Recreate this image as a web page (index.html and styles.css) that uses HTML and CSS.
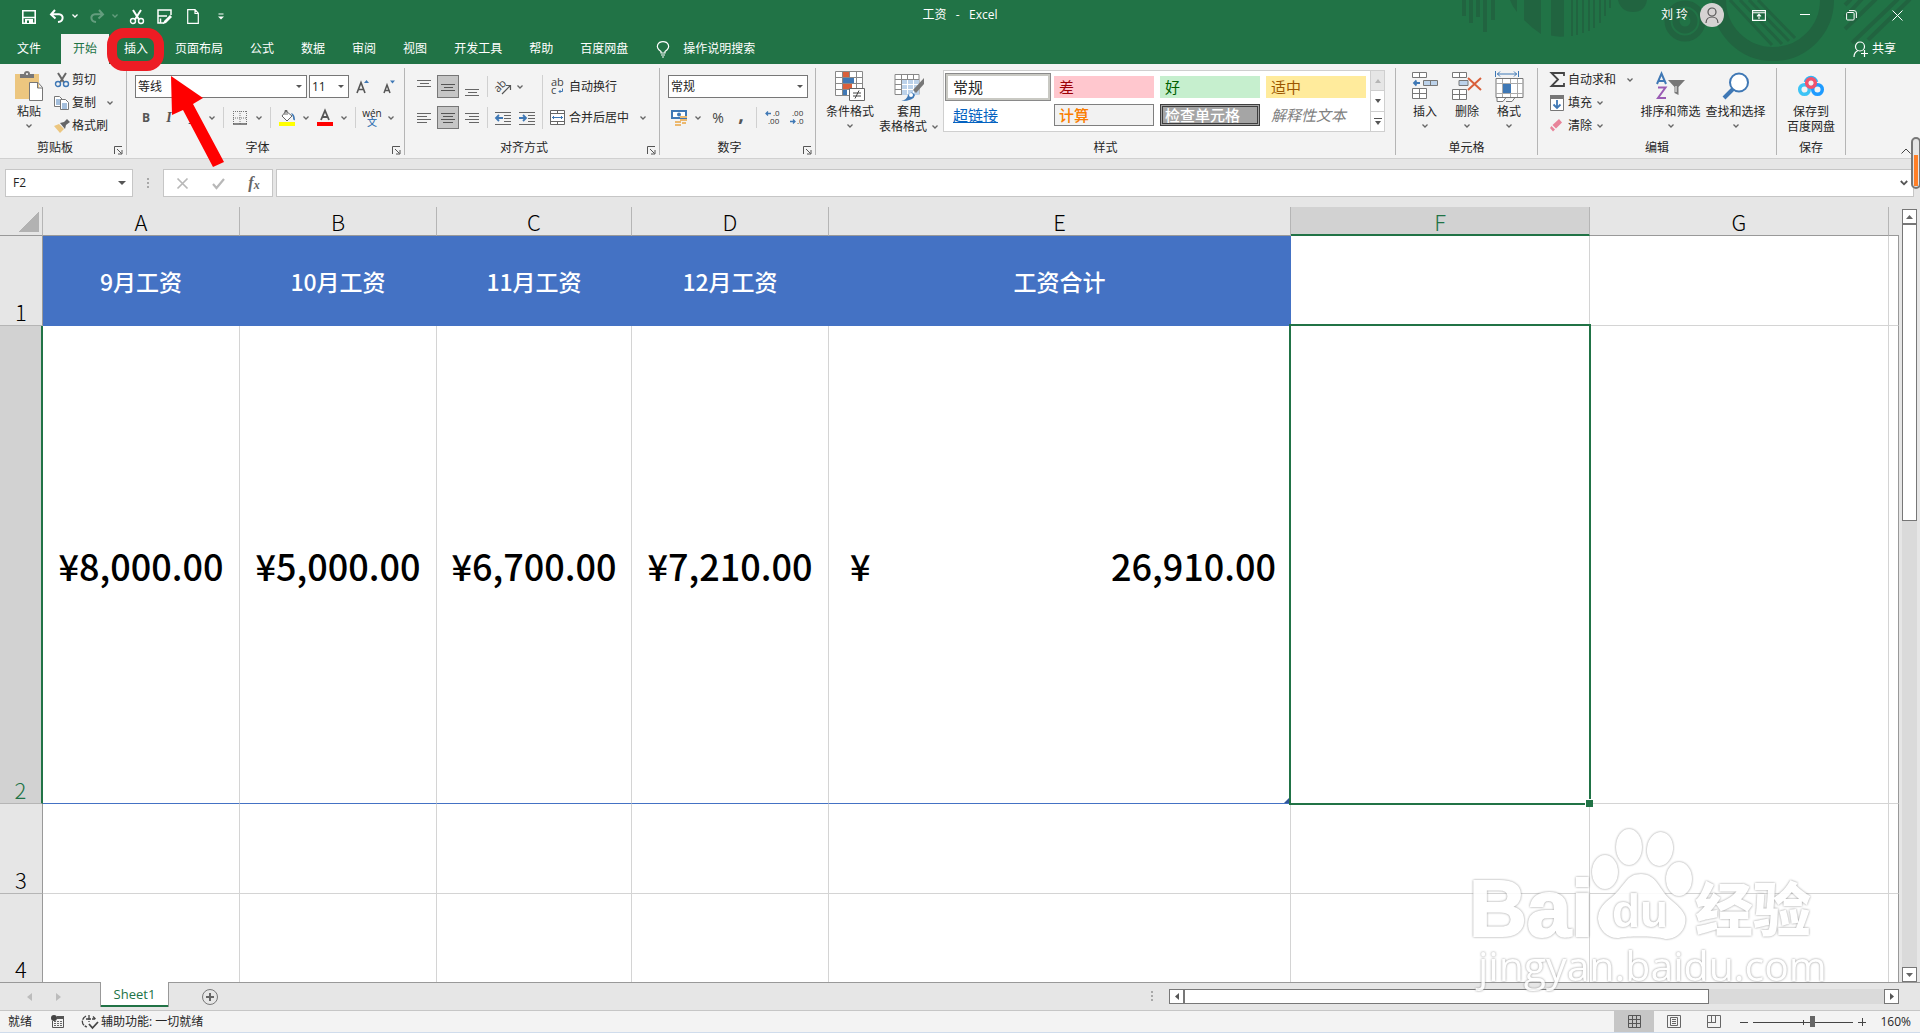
FILE: index.html
```html
<!DOCTYPE html>
<html lang="zh-CN">
<head>
<meta charset="utf-8">
<title>工资 - Excel</title>
<link rel="stylesheet" href="styles.css">
</head>
<body>
<svg class="defs" width="0" height="0" aria-hidden="true">
  <symbol id="chev" viewBox="0 0 8 8"><path d="M1.500 2.500L4 5L6.500 2.500" fill="none" stroke="currentColor" stroke-width="1.300"/></symbol>
  <symbol id="launch" viewBox="0 0 9 9"><path d="M.5 8V.5H8M3 3l4.500 4.500M8 4v4H4" fill="none" stroke="#555"/></symbol>
  <symbol id="cut" viewBox="0 0 16 16"><path d="M4 1l6 9.500M12 1L6 10.500" fill="none" stroke="var(--blade)" stroke-width="2"/><circle cx="4" cy="12" r="2.500" fill="none" stroke="var(--ring)" stroke-width="1.400"/><circle cx="12" cy="12" r="2.500" fill="none" stroke="var(--ring)" stroke-width="1.400"/></symbol>
</svg>

<div class="app">
<header class="top">
  <svg class="decor" width="480" height="64" viewBox="0 0 480 64" aria-hidden="true">
    <g fill="#216440">
      <path d="M22 0h4v16h-4zM29 0h4v23h-4zM36 0h4v17h-4zM43 0h4v32h-4zM51 0h4v20h-4z"/>
      <path d="M70 0H77V12Q72 6 70 0zM84 0h17v34Q92 28 84 20zM111 0h13v36.500q-7 .5-13-1zM131 0h2v36h-2zM136 0h2v35h-2zM142 0h2v33h-2zM148 0h2v31h-2zM153 0h2v28h-2zM159 0h2v23h-2zM164 0h2v16h-2zM169 0h2v8h-2z"/>
      <path d="M178 0h29q-2 12-14 12T178 0z"/>
    </g>
    <g fill="none" stroke="#216440">
      <circle cx="245" cy="21" r="17.500" stroke-width="6"/><circle cx="245" cy="21" r="9" stroke-width="7"/>
      <circle cx="333" cy="0" r="54" stroke-width="14"/>
      <path d="M290 0l42 45M300 0l42 44M309 0l40 41M318 0l37 38" stroke-width="3"/>
      <path d="M405 5l6-6M405 17l17-18M405 29l31-30M412 43l46-44M428 40l42-41" stroke-width="4"/>
    </g>
  </svg>

  <div class="titlebar">
    <div class="qat">
      <button class="tb" aria-label="保存"><svg width="14" height="14" viewBox="0 0 14 14"><path d="M.8.800h12.400v12.400H.8zM.8 7.500h12.400" fill="none" stroke="#fff" stroke-width="1.600"/><path d="M3 9h8v4H3z" fill="#fff"/><path d="M5 10.500h2V13H5z" fill="#217346"/></svg></button>
      <span class="split"><button class="tb" aria-label="撤消"><svg width="16" height="15" viewBox="0 0 16 15"><path d="M6 1L2 5.500L6.500 9.500M2.500 5.300H10c5 .2 5 7-1 7.700" fill="none" stroke="#fff" stroke-width="2"/></svg></button><button class="dd" aria-label="撤消列表"><svg width="8" height="8"><use href="#chev"/></svg></button></span>
      <span class="split faded"><button class="tb" aria-label="恢复"><svg width="16" height="15" viewBox="0 0 16 15"><path d="M10 1l4 4.500L9.500 9.500M13.500 5.300H6c-5 .2-5 7 1 7.700" fill="none" stroke="#fff" stroke-width="2"/></svg></button><button class="dd" aria-label="恢复列表"><svg width="8" height="8"><use href="#chev"/></svg></button></span>
      <button class="tb cut-white" aria-label="剪切"><svg width="16" height="16"><use href="#cut"/></svg></button>
      <button class="tb" aria-label="另存为"><svg width="16" height="16" viewBox="0 0 16 16"><path d="M7 14H1V1h13v5M1.500 7H10M3.500 9.500V14" fill="none" stroke="#fff" stroke-width="1.500"/><path d="M6 15l1-3 6-6 2 2-6 6z" fill="#fff"/></svg></button>
      <button class="tb" aria-label="新建"><svg width="12" height="15" viewBox="0 0 12 15"><path d="M.7.700H8l3.300 3.600v10H.7zM8 1v3.500h3" fill="none" stroke="#fff" stroke-width="1.200"/></svg></button>
      <button class="tb" aria-label="自定义快速访问工具栏"><svg width="6" height="8" viewBox="0 0 6 8"><path d="M.5 1h5" stroke="#fff"/><path d="M0 3.500h6l-3 3z" fill="#fff"/></svg></button>
    </div>
    <h1 class="doc">工资&nbsp;&nbsp; -&nbsp;&nbsp; Excel</h1>
    <div class="winctl">
      <span class="user">刘 玲</span>
      <svg class="avatar" width="24" height="24" viewBox="0 0 24 24"><circle cx="12" cy="12" r="12" fill="#d6d3d3"/><circle cx="12" cy="9" r="4" fill="none" stroke="#555" stroke-width="1.200"/><path d="M6 20c0-8 12-8 12 0" fill="none" stroke="#555" stroke-width="1.200"/></svg>
      <button class="win" aria-label="功能区显示选项"><svg width="14" height="11" viewBox="0 0 14 11"><path d="M.6.600h12.800v9.800H.6zM.6 2.800h12.800M7 9V4.500M5 6.300l2-2 2 2" fill="none" stroke="#fff" stroke-width="1.100"/></svg></button>
      <button class="win" aria-label="最小化"><svg width="10" height="10"><path d="M0 4.500h10" stroke="#fff"/></svg></button>
      <button class="win" aria-label="还原"><svg width="11" height="11" viewBox="0 0 11 11"><rect x=".6" y="2.500" width="7.500" height="7.500" rx="1" fill="none" stroke="#fff"/><path d="M3 .6h5q2.400 0 2.400 2.400v5" fill="none" stroke="#fff"/></svg></button>
      <button class="win" aria-label="关闭"><svg width="11" height="11"><path d="M.5.500l10 10M10.500.500l-10 10" stroke="#fff"/></svg></button>
    </div>
  </div>

  <nav class="tabs">
    <button class="tab file">文件</button>
    <button class="tab active">开始</button>
    <button class="tab">插入</button>
    <button class="tab">页面布局</button>
    <button class="tab">公式</button>
    <button class="tab">数据</button>
    <button class="tab">审阅</button>
    <button class="tab">视图</button>
    <button class="tab">开发工具</button>
    <button class="tab">帮助</button>
    <button class="tab">百度网盘</button>
    <button class="tab tell"><svg width="12" height="17" viewBox="0 0 12 17"><path d="M4 12V10.500C-3 5.500 1.500.600 6 .6s9 4.900 2 9.900V12zM4 14h4M5 16h2" fill="none" stroke="#fff" stroke-width="1.200"/></svg>操作说明搜索</button>
    <button class="tab share"><svg width="15" height="17" viewBox="0 0 15 17"><circle cx="7" cy="5.500" r="4.500" fill="none" stroke="#fff" stroke-width="1.200"/><path d="M1 16c0-4 2-5.500 4-6.500M11.500 9v7M8 12.500h7" fill="none" stroke="#fff" stroke-width="1.200"/></svg>共享</button>
  </nav>
</header>

<section class="ribbon">
  <div class="group g-clip">
    <div class="body">
      <button class="big">
        <span class="pic"><svg width="28" height="30" viewBox="0 0 28 30"><path d="M0 3h24v25H0z" fill="#ecc67f"/><path d="M5 7V3h4q0-3 3-3t3 3h4v4z" fill="#777"/><path d="M14.500 11.500h8.500l4.500 5v13h-13zM22.500 12v5h5" fill="#fff" stroke="#777"/><circle cx="12" cy="3" r="1" fill="#fff"/></svg></span>
        <span>粘贴</span><svg width="8" height="8"><use href="#chev"/></svg>
      </button>
      <div class="stack">
        <button class="small cut-grey"><span class="ico"><svg width="16" height="16"><use href="#cut"/></svg></span>剪切</button>
        <button class="small"><span class="ico"><svg width="16" height="14" viewBox="0 0 16 14"><path d="M.5.500h5l3 3v7h-8z" fill="#fff" stroke="#777"/><path d="M2 4h4M2 6h4M2 8h4" stroke="#4a7fb8"/><path d="M6.500 3.500h5l3 3v7h-8z" fill="#fff" stroke="#777"/><path d="M8 8h5M8 10h5M8 12h5" stroke="#4a7fb8"/></svg></span>复制<svg class="after" width="8" height="8"><use href="#chev"/></svg></button>
        <button class="small"><span class="ico"><svg width="16" height="14" viewBox="0 0 16 14"><path d="M0 7l5-2 5 5-4 4z" fill="#ecc67f"/><path d="M6 4l4-1 3-3 3 3-4 3-1 4z" fill="#666"/></svg></span>格式刷</button>
      </div>
    </div>
    <div class="foot"><span>剪贴板</span><button class="launch" aria-label="剪贴板选项"><svg width="9" height="9"><use href="#launch"/></svg></button></div>
  </div>

  <div class="group g-font">
    <div class="body rows">
      <div class="line">
        <span class="combo fontname"><select aria-label="字体"><option>等线</option></select></span>
        <span class="combo fontsize"><select aria-label="字号"><option>11</option></select></span>
        <button class="ib" aria-label="增大字号"><svg width="14" height="16" viewBox="0 0 14 16"><path d="M1 14L5 3.500L9 14M2.500 10.500h5" fill="none" stroke="#555" stroke-width="1.600"/><path d="M8 4l2.500-3L13 4z" fill="#3f78b5"/></svg></button>
        <button class="ib" aria-label="减小字号"><svg width="14" height="16" viewBox="0 0 14 16"><path d="M2 14L5 6l3 8M3 11.500h4" fill="none" stroke="#555" stroke-width="1.500"/><path d="M8 1.500h5L10.500 4.500z" fill="#3f78b5"/></svg></button>
      </div>
      <div class="line tight">
        <button class="ib bold">B</button><button class="ib ital">I</button><button class="ib under">U</button><button class="dd" aria-label="下划线样式"><svg width="8" height="8"><use href="#chev"/></svg></button>
        <i class="sep"></i>
        <button class="ib" aria-label="边框"><svg width="14" height="14" viewBox="0 0 14 14"><path d="M0 .5h14M.5 0v13M7 0v13M13.500 0v13M0 7h14" stroke="#777" stroke-dasharray="1 1"/><path d="M0 13h14" stroke="#555" stroke-width="1.400"/></svg></button><button class="dd" aria-label="边框样式"><svg width="8" height="8"><use href="#chev"/></svg></button>
        <i class="sep"></i>
        <button class="ib" aria-label="填充颜色"><svg width="17" height="17" viewBox="0 0 17 17"><path d="M7 2l6 5-5 5-5-5z" fill="#fff" stroke="#666"/><path d="M6 6V1.500h2V6" fill="none" stroke="#666"/><path d="M12 4q4 1 4 7-2 1-2-3z" fill="#3f78b5"/><path d="M0 13h16v4H0z" fill="#ff0"/></svg></button><button class="dd" aria-label="填充颜色列表"><svg width="8" height="8"><use href="#chev"/></svg></button>
        <button class="ib" aria-label="字体颜色"><svg width="16" height="17" viewBox="0 0 16 17"><path d="M4 11L8 1.500L12 11M5.500 8h5" fill="none" stroke="#555" stroke-width="1.800"/><path d="M0 13h16v4H0z" fill="red"/></svg></button><button class="dd" aria-label="字体颜色列表"><svg width="8" height="8"><use href="#chev"/></svg></button>
        <i class="sep"></i>
        <button class="ib pinyin"><span>wén</span><b>文</b></button><button class="dd" aria-label="拼音"><svg width="8" height="8"><use href="#chev"/></svg></button>
      </div>
    </div>
    <div class="foot"><span>字体</span><button class="launch" aria-label="字体设置"><svg width="9" height="9"><use href="#launch"/></svg></button></div>
  </div>

  <div class="group g-align">
    <div class="body">
      <div class="rows">
        <div class="line">
          <button class="al" aria-label="顶端对齐"><svg width="14" height="20"><path d="M0 3.500h14M3 6.500h9M0 9.500h14" stroke="#666"/></svg></button>
          <button class="al on" aria-label="垂直居中"><svg width="14" height="20"><path d="M0 7.500h14M3 10.500h9M0 13.500h14" stroke="#555"/></svg></button>
          <button class="al" aria-label="底端对齐"><svg width="14" height="20"><path d="M0 12.500h14M3 15.500h9M0 18.500h14" stroke="#666"/></svg></button>
          <i class="sep"></i>
          <button class="al" aria-label="方向"><svg width="17" height="16" viewBox="0 0 17 16"><text x="0" y="11" font-size="11" fill="#444" transform="rotate(-45 5 9)">ab</text><path d="M7 15l8-8M11 6.500h4.500V11" fill="none" stroke="#555" stroke-width="1.200"/></svg></button><svg width="8" height="8"><use href="#chev"/></svg>
        </div>
        <div class="line">
          <button class="al" aria-label="左对齐"><svg width="14" height="12"><path d="M0 1.500h14M0 4.500h10M0 7.500h14M0 10.500h10" stroke="#666"/></svg></button>
          <button class="al on" aria-label="居中"><svg width="14" height="12"><path d="M0 1.500h14M2 4.500h10M0 7.500h14M2 10.500h10" stroke="#555"/></svg></button>
          <button class="al" aria-label="右对齐"><svg width="14" height="12"><path d="M0 1.500h14M4 4.500h10M0 7.500h14M4 10.500h10" stroke="#666"/></svg></button>
          <i class="sep"></i>
          <button class="al" aria-label="减少缩进"><svg width="16" height="14"><path d="M0 1.500h16M9 4.500h7M9 7.500h7M9 10.500h7M0 13.500h16" stroke="#666"/><path d="M8 7H1M4 4L1 7l3 3" fill="none" stroke="#3f78b5" stroke-width="1.800"/></svg></button>
          <button class="al" aria-label="增加缩进"><svg width="16" height="14"><path d="M0 1.500h16M9 4.500h7M9 7.500h7M9 10.500h7M0 13.500h16" stroke="#666"/><path d="M0 7h7M4 4l3 3-3 3" fill="none" stroke="#3f78b5" stroke-width="1.800"/></svg></button>
        </div>
      </div>
      <i class="sep tall"></i>
      <div class="rows">
        <button class="small"><span class="ico"><svg width="14" height="16" viewBox="0 0 14 16"><text x="0" y="7" font-size="11" fill="#444">ab</text><text x="0" y="15" font-size="11" fill="#444">c</text><path d="M11.500 9.500v3H8M9.500 11L8 12.500 9.500 14" fill="none" stroke="#3f78b5"/></svg></span>自动换行</button>
        <button class="small"><span class="ico"><svg width="16" height="15" viewBox="0 0 16 15"><path d="M.5.500h14v14H.5zM.5 3.500h14M.5 11.500h14M7.500 0v3M7.500 12v3" fill="#fff" stroke="#666"/><path d="M2 7.500h11M4 6L2.500 7.500 4 9M11 6l1.500 1.500L11 9" fill="none" stroke="#3f78b5"/></svg></span>合并后居中<svg class="after" width="8" height="8"><use href="#chev"/></svg></button>
      </div>
    </div>
    <div class="foot"><span>对齐方式</span><button class="launch" aria-label="对齐设置"><svg width="9" height="9"><use href="#launch"/></svg></button></div>
  </div>

  <div class="group g-num">
    <div class="body rows">
      <div class="line"><span class="combo wide"><select aria-label="数字格式"><option>常规</option></select></span></div>
      <div class="line tight">
        <button class="al" aria-label="会计格式"><svg width="17" height="16" viewBox="0 0 17 16"><path d="M1 1h14v7H1z" fill="#fff" stroke="#3f78b5" stroke-width="2"/><circle cx="8" cy="4.500" r="2" fill="#3f78b5"/><path d="M9 6h7v2H9zM9 9h7v2H9zM4 11h6v2H4zM4 14h6v2H4zM11 12h4v2h-4z" fill="#ecb96f"/></svg></button><button class="dd" aria-label="货币符号"><svg width="8" height="8"><use href="#chev"/></svg></button>
        <button class="ib pct">%</button><button class="ib comma">,</button>
        <i class="sep"></i>
        <button class="ib" aria-label="增加小数位数"><svg width="16" height="15" viewBox="0 0 16 15"><text x="8" y="6" font-size="8" fill="#333">.0</text><text x="3" y="14" font-size="8" fill="#333">.00</text><path d="M6 3.500H1M3 1.500l-2 2 2 2" fill="none" stroke="#3f78b5" stroke-width="1.300"/></svg></button>
        <button class="ib" aria-label="减少小数位数"><svg width="16" height="15" viewBox="0 0 16 15"><text x="3" y="6" font-size="8" fill="#333">.00</text><text x="8" y="14" font-size="8" fill="#333">.0</text><path d="M1 11.500h5M4 9.500l2 2-2 2" fill="none" stroke="#3f78b5" stroke-width="1.300"/></svg></button>
      </div>
    </div>
    <div class="foot"><span>数字</span><button class="launch" aria-label="数字设置"><svg width="9" height="9"><use href="#launch"/></svg></button></div>
  </div>

  <div class="group g-style">
    <div class="body">
      <button class="big w56"><span class="pic"><svg width="30" height="30" viewBox="0 0 30 30"><path d="M.5.500h27v24H.5zM.5 6.500h27M.5 12.500h27M.5 18.500h27M7.500 0v24M14.500 0v24M21.500 0v24" fill="#fff" stroke="#888"/><path d="M8 1h6v5H8zM8 13h9v5H8z" fill="#d9603b"/><path d="M8 7h11v5H8zM8 19h4v5H8z" fill="#3f78b5"/><path d="M14.500 17.500h15v12h-15z" fill="#fff" stroke="#666"/><path d="M18 22h8M18 25h8M24 19.500l-4 8" stroke="#444"/></svg></span><span>条件格式</span><svg width="8" height="8"><use href="#chev"/></svg></button>
      <button class="big w62"><span class="pic"><svg width="30" height="30" viewBox="0 0 30 30"><path d="M1 3.500h24v20H1zM1 8.500h24M1 13.500h24M1 18.500h24M7.500 3v20M13.500 3v20M19.500 3v20" fill="#fff" stroke="#888"/><path d="M8 9h17v15H8z" fill="#bcd2ea"/><path d="M8 13.500h17M8 18.500h17M13.500 9v14M19.500 9v14" stroke="#fff"/><path d="M30 7v6l-8 9-3-3z" fill="#777"/><path d="M7 30q6-1 7-6 4-5 7 0-1 6-14 6z" fill="#3f78b5"/><circle cx="17" cy="24" r="2" fill="#fff"/></svg></span><span>套用</span><span class="dual">表格格式<svg width="8" height="8"><use href="#chev"/></svg></span></button>
      <div class="gallery">
        <div class="swatches">
          <button class="sw normal">常规</button><button class="sw bad">差</button><button class="sw good">好</button><button class="sw neutral">适中</button>
          <button class="sw link">超链接</button><button class="sw calc">计算</button><button class="sw check">检查单元格</button><button class="sw expl">解释性文本</button>
        </div>
        <div class="gscroll">
          <button class="off" aria-label="上一行"><svg width="6" height="4"><path d="M0 4h6L3 0z" fill="#b5b5b5"/></svg></button>
          <button aria-label="下一行"><svg width="6" height="4"><path d="M0 0h6L3 4z" fill="#555"/></svg></button>
          <button aria-label="其他样式"><svg width="8" height="7"><path d="M0 .5h8" stroke="#555"/><path d="M1 3h6L4 7z" fill="#555"/></svg></button>
        </div>
      </div>
    </div>
    <div class="foot"><span>样式</span></div>
  </div>

  <div class="group g-cell">
    <div class="body">
      <button class="big w42"><span class="pic"><svg width="27" height="28" viewBox="0 0 27 28"><path d="M.5.500h14v5H.5zM7.500 0v5M.5 16.500h14v10H.5zM7.500 16v10M.5 21.500h14" fill="#fff" stroke="#777"/><path d="M11.500 8.500h14v5h-14z" fill="#bcd2ea" stroke="#777"/><path d="M18.500 8v5" stroke="#777"/><path d="M8 11H2M4.500 8.500L2 11l2.500 2.500" fill="none" stroke="#3f78b5" stroke-width="1.800"/></svg></span><span>插入</span><svg width="8" height="8"><use href="#chev"/></svg></button>
      <button class="big w42"><span class="pic"><svg width="30" height="28" viewBox="0 0 30 28"><path d="M.5.500h14v5H.5zM7.500 0v5M.5 17.500h14v10H.5zM7.500 17v10M.5 22.500h14" fill="#fff" stroke="#777"/><path d="M7 8.500h9v5H7z" fill="#bcd2ea" stroke="#777"/><path d="M16 6l13 12M29 6L16 18" stroke="#d9603b" stroke-width="2"/></svg></span><span>删除</span><svg width="8" height="8"><use href="#chev"/></svg></button>
      <button class="big w42"><span class="pic"><svg width="29" height="31" viewBox="0 0 29 31"><path d="M.5 0v6M23.500 0v6M2 3h20M5 .5L2.500 3 5 5.500M19 .5L21.500 3 19 5.500" fill="none" stroke="#3f78b5"/><path d="M2 26v4.500h6l3-4M11 30.500h6l3-4" fill="#fff" stroke="#777"/><path d="M1 7.500h27v19H1z" fill="#fff" stroke="#777"/><path d="M1 12.500h27M1 22.500h27M7.500 8v18M15.500 8v18M22.500 8v18" stroke="#aaa"/><path d="M8 13h8v9H8z" fill="#3f78b5"/></svg></span><span>格式</span><svg width="8" height="8"><use href="#chev"/></svg></button>
    </div>
    <div class="foot"><span>单元格</span></div>
  </div>

  <div class="group g-edit">
    <div class="body">
      <div class="stack">
        <button class="small"><span class="ico"><svg width="15" height="15" viewBox="0 0 15 15"><path d="M14 4V1H1.500L8 7.500 1.500 14H14v-3" fill="none" stroke="#444" stroke-width="1.800"/></svg></span>自动求和<svg class="after" width="8" height="8"><use href="#chev"/></svg></button>
        <button class="small near"><span class="ico"><svg width="14" height="16" viewBox="0 0 14 16"><path d="M.5.500h13v15H.5z" fill="#fff" stroke="#777"/><path d="M0 0h14v4H0z" fill="#777"/><path d="M7 5v8M3.500 9.500L7 13l3.500-3.500" fill="none" stroke="#3f78b5" stroke-width="1.800"/></svg></span>填充<svg class="after" width="8" height="8"><use href="#chev"/></svg></button>
        <button class="small near"><span class="ico"><svg width="14" height="14" viewBox="0 0 14 14"><path d="M9 0l3 3.500-6 6L2.500 6zM1.500 7L5 10.500 3 12.500 0 9z" fill="#e8849a"/></svg></span>清除<svg class="after" width="8" height="8"><use href="#chev"/></svg></button>
      </div>
      <button class="big w65"><span class="pic"><svg width="30" height="28" viewBox="0 0 30 28"><path d="M1 12L5.500 1.500 10 12M2.500 9h6" fill="none" stroke="#3f78b5" stroke-width="2"/><path d="M2 15.500h7.500L2 26h8" fill="none" stroke="#9a5cb4" stroke-width="2"/><path d="M12 8h17l-6.500 7v8l-4-2v-6z" fill="#777"/><path d="M20 14v6" stroke="#fff"/></svg></span><span>排序和筛选</span><svg width="8" height="8"><use href="#chev"/></svg></button>
      <button class="big w65"><span class="pic"><svg width="28" height="28" viewBox="0 0 28 28"><circle cx="17" cy="10.500" r="9" fill="#fff" stroke="#3f78b5" stroke-width="2"/><path d="M11 17l-9 9" stroke="#3f78b5" stroke-width="4"/></svg></span><span>查找和选择</span><svg width="8" height="8"><use href="#chev"/></svg></button>
    </div>
    <div class="foot"><span>编辑</span></div>
  </div>

  <div class="group g-save">
    <div class="body">
      <button class="big w56"><span class="pic"><svg width="26" height="22" viewBox="0 0 26 22" fill="none" stroke-width="3.500"><circle cx="6.500" cy="14.500" r="4.800" stroke="#3cc3f5"/><circle cx="19.500" cy="14.500" r="4.800" stroke="#1e9bff"/><path d="M7.500 7a5.600 5.600 0 0 1 11 0" stroke="#2cb5f8"/><circle cx="13" cy="8" r="4.300" stroke="#f2536c"/></svg></span><span>保存到</span><span>百度网盘</span></button>
    </div>
    <div class="foot"><span>保存</span></div>
  </div>
  <button class="collapse" aria-label="折叠功能区"><svg width="10" height="6"><path d="M.5 5.500L5 1l4.500 4.500" fill="none" stroke="#444"/></svg></button>
</section>

<section class="formula">
  <span class="combo namebox"><input aria-label="名称框" value="F2"></span>
  <svg class="grip" width="3" height="11"><path d="M0 0h2v2H0zM0 4h2v2H0zM0 8h2v2H0z" fill="#a8a8a8"/></svg>
  <div class="fxbox">
    <button aria-label="取消"><svg width="11" height="11"><path d="M.5.500l10 10M10.500.500l-10 10" stroke="#b8b8b8" stroke-width="1.700"/></svg></button>
    <button aria-label="输入"><svg width="13" height="11"><path d="M1 6l3.500 4L12 1" fill="none" stroke="#b8b8b8" stroke-width="2.200"/></svg></button>
    <button class="fx"><i>f</i><small>x</small></button>
  </div>
  <div class="fxline"><input aria-label="编辑栏"><svg width="8" height="6"><path d="M.8 1L4 4.300 7.200 1" fill="none" stroke="#555" stroke-width="1.800"/></svg></div>
</section>

<main class="work">
  <table class="sheet">
    <colgroup><col class="c-row"><col class="c-a"><col class="c-a"><col class="c-c"><col class="c-a"><col class="c-e"><col class="c-f"><col class="c-f"><col></colgroup>
    <thead><tr><th class="corner"></th><th>A</th><th>B</th><th>C</th><th>D</th><th>E</th><th class="sel">F</th><th>G</th><th></th></tr></thead>
    <tbody>
      <tr class="r1"><th>1</th><td>9月工资</td><td>10月工资</td><td>11月工资</td><td>12月工资</td><td>工资合计</td><td class="free"></td><td class="free"></td><td class="free"></td></tr>
      <tr class="r2"><th class="sel">2</th><td>¥8,000.00</td><td>¥5,000.00</td><td>¥6,700.00</td><td>¥7,210.00</td><td class="total"><div class="acct"><span>¥</span><span>26,910.00</span></div></td><td class="current"></td><td></td><td></td></tr>
      <tr class="r3"><th>3</th><td></td><td></td><td></td><td></td><td></td><td></td><td></td><td></td></tr>
      <tr class="r4"><th>4</th><td></td><td></td><td></td><td></td><td></td><td></td><td></td><td></td></tr>
    </tbody>
  </table>
  <div class="vscroll">
    <button aria-label="向上"><svg width="7" height="4"><path d="M0 4h7L3.500 0z" fill="#666"/></svg></button>
    <div class="vtrack"><div class="vthumb"></div></div>
    <button aria-label="向下"><svg width="7" height="4"><path d="M0 0h7L3.500 4z" fill="#666"/></svg></button>
  </div>
</main>

<div class="sheetbar">
  <div class="navs"><button aria-label="上一张"><svg width="5" height="8"><path d="M5 0v8L0 4z" fill="#bcbcbc"/></svg></button><button aria-label="下一张"><svg width="5" height="8"><path d="M0 0v8l5-4z" fill="#bcbcbc"/></svg></button></div>
  <button class="stab">Sheet1</button>
  <button class="add" aria-label="新工作表"><svg width="16" height="16"><circle cx="8" cy="8" r="7.500" fill="none" stroke="#777"/><path d="M8 4v8M4 8h8" stroke="#666" stroke-width="2"/></svg></button>
  <svg class="grip" width="3" height="11"><path d="M0 0h2v2H0zM0 4h2v2H0zM0 8h2v2H0z" fill="#a8a8a8"/></svg>
  <div class="hscroll">
    <button aria-label="向左"><svg width="4" height="7"><path d="M4 0v7L0 3.500z" fill="#555"/></svg></button>
    <div class="htrack"><div class="hthumb"></div></div>
    <button aria-label="向右"><svg width="4" height="7"><path d="M0 0v7l4-3.500z" fill="#555"/></svg></button>
  </div>
</div>

<footer class="status">
  <span>就绪</span>
  <svg class="macro" width="14" height="13" viewBox="0 0 14 13"><path d="M1.500 6v6.500h11v-11H7" fill="none" stroke="#555"/><path d="M6 1h7v3H6z" fill="#555"/><circle cx="3" cy="3" r="3" fill="#444"/><path d="M3 6.500h8M3 8.500h8M3 10.500h8" stroke="#666" stroke-dasharray="2 1"/></svg>
  <svg class="acc" width="17" height="15" viewBox="0 0 17 15"><path d="M4 2C-1 5-1 11 5 13M7 1v7M4 5h9M11 2.500l2.500 2.500" fill="none" stroke="#444" stroke-width="1.300" stroke-dasharray="5 1"/><path d="M7 10l3.500 4L16 8" fill="none" stroke="#444" stroke-width="1.800"/></svg>
  <span>辅助功能: 一切就绪</span>
  <div class="views">
    <button class="view current-view" aria-label="普通"><svg width="13" height="13"><path d="M.5.500h12v12H.5zM4.500 0v13M8.500 0v13M0 4.500h13M0 8.500h13" fill="none" stroke="#555"/></svg></button>
    <button class="view" aria-label="页面布局"><svg width="14" height="13"><path d="M.5.500h13v12H.5zM3.500 2.500h7v8h-7zM5 4.500h4M5 6.500h4M5 8.500h4" fill="none" stroke="#666"/></svg></button>
    <button class="view" aria-label="分页预览"><svg width="14" height="13"><path d="M.5.500h13v12H.5zM4.500 0v7M8.500 0v7M0 7.500h9" fill="none" stroke="#666"/></svg></button>
  </div>
  <button class="zb" aria-label="缩小"><svg width="8" height="8"><path d="M0 4.500h8" stroke="#444"/></svg></button>
  <input class="zoom" type="range" min="0" max="100" value="60" aria-label="显示比例">
  <button class="zb" aria-label="放大"><svg width="8" height="8"><path d="M0 4.500h8M4.500 0v8" stroke="#444"/></svg></button>
  <span class="pctval">160%</span>
</footer>
</div>

<svg class="pointer" width="120" height="145" viewBox="0 0 120 145" aria-hidden="true">
  <rect x="7" y="8" width="47" height="33" rx="12" fill="none" stroke="#ed1c24" stroke-width="10"/>
  <path d="M66 51L98 73 88 79 119 137 108 142 78 85 67 90z" fill="red"/>
</svg>
<svg class="floater" width="9" height="52" viewBox="0 0 9 52" aria-hidden="true"><rect x="1" y="1" width="8" height="50" rx="4" fill="#e6e6e6" stroke="#777" stroke-width="2"/><path d="M3 18h4v31H3z" fill="#ff7f27"/></svg>
<svg class="brand" width="360" height="180" viewBox="0 0 360 180" aria-label="Baidu 经验 jingyan.baidu.com">
  <text class="bai" x="9" y="115">Bai</text>
  <g class="paw"><ellipse cx="145" cy="51" rx="13" ry="17"/><ellipse cx="169" cy="26" rx="13" ry="18"/><ellipse cx="200" cy="28" rx="13" ry="17" transform="rotate(8 200 28)"/><ellipse cx="219" cy="58" rx="13" ry="17"/><path d="M181 53c16 0 18 16 30 26 13 11 16 16 14 24-2 10-12 16-20 15-10-3-36-3-46-1-11 1-20-8-21-19 0-10 6-16 14-22 14-12 14-23 29-23z"/></g>
  <text class="du" x="152" y="106">du</text>
  <text class="jy" x="235" y="110">经验</text>
  <text class="url" x="18" y="160">jingyan.baidu.com</text>
</svg>
</body>
</html>
```
FILE: styles.css
```css
* { box-sizing: border-box; }
body {
  margin: 0;
  font: 12px/16px "Open Sans", "Noto Sans CJK SC", sans-serif;
  color: #262626;
  background: #e6e6e6;
  position: relative;
}
button, input, select { font: inherit; color: inherit; border: 0; padding: 0; margin: 0; background: none; }
button { display: flex; align-items: center; justify-content: center; white-space: nowrap; }
svg { display: block; flex: none; overflow: visible; }
.defs { position: absolute; }
.app { display: flex; flex-direction: column; min-height: 100vh; }

/* title bar and tabs */
.top { background: #217346; color: #fff; position: relative; }
.decor { position: absolute; right: 0; top: 0; overflow: hidden; }
.titlebar { display: grid; grid-template-columns: 1fr auto 1fr; align-items: center; height: 34px; position: relative; padding-bottom: 4px; }
.qat { display: flex; align-items: center; gap: 4px; padding: 3px 0 0 17px; }
.split { display: flex; }
.faded { opacity: .3; }
.tb { width: 24px; height: 24px; }
.qat .dd { width: 12px; color: #fff; }
.cut-white { --blade: #fff; --ring: #fff; }
.cut-grey { --blade: #666; --ring: #3f78b5; }
.doc { font-size: 12px; line-height: 16px; font-weight: 400; margin: 0; }
.winctl { display: flex; align-items: center; justify-content: flex-end; }
.user { margin-right: 12px; }
.avatar { margin-right: 12px; }
.win { width: 46px; height: 30px; }
.tabs { display: flex; gap: 3px; height: 30px; position: relative; }
.tab { padding: 0 12px; height: 30px; }
.file { padding: 0 17px; }
.active { background: #f3f3f3; color: #217346; }
.tell { gap: 14px; margin-left: 2px; }
.share { gap: 4px; margin-left: auto; padding-right: 24px; }

/* ribbon */
.ribbon { display: flex; background: #f3f3f3; padding: 4px 0 3px; border-bottom: 1px solid #d0d0d0; height: 95px; position: relative; }
.ribbon svg { color: #666; }
.group { display: flex; flex-direction: column; flex: none; border-right: 1px solid #b5b5b5; }
.body { display: flex; height: 72px; align-items: flex-start; }
.rows { display: flex; flex-direction: column; gap: 8px; padding-top: 7px; align-items: flex-start; }
.foot { display: flex; align-items: center; justify-content: center; height: 15px; position: relative; }
.launch { position: absolute; right: 3px; bottom: 0; }
.g-clip { width: 127px; }
.g-font { width: 278px; }
.g-align { width: 255px; }
.g-num { width: 156px; }
.g-clip .foot, .g-font .foot, .g-align .foot, .g-num .foot { padding-right: 16px; }
.g-style { width: 580px; }
.g-cell { width: 142px; }
.g-edit { width: 239px; }
.g-save { width: 69px; }
.g-clip .body, .g-style .body, .g-save .body { padding-left: 6px; }
.g-font .body, .g-align .body, .g-num .body, .g-cell .body, .g-edit .body { padding-left: 8px; }
.big { width: 46px; flex-direction: column; justify-content: flex-start; line-height: 15px; }
.big .pic { display: flex; align-items: center; justify-content: center; height: 36px; }
.big > svg { margin-top: 3px; }
.w56 { width: 56px; }
.w62 { width: 62px; }
.w42 { width: 42px; }
.w65 { width: 65px; }
.dual { display: flex; align-items: center; gap: 4px; }
.stack { display: flex; flex-direction: column; }
.small { height: 23px; justify-content: flex-start; }
.ico { width: 22px; display: flex; justify-content: center; }
.g-clip .ico { width: 20px; }
.after { margin-left: 10px; }
.near .after { margin-left: 4px; }
.g-edit .stack { width: 92px; }
.line { display: flex; align-items: center; height: 23px; gap: 2px; }
.tight { gap: 0; }
.ib { width: 24px; height: 23px; }
.al { width: 22px; height: 23px; }
.on { background: #c6c6c6; border: 1px solid #777; }
.dd { width: 14px; height: 23px; }
.g-num .dd { width: 16px; }
.sep { width: 1px; height: 21px; background: #d0d0d0; margin: 0 4px; }
.line:not(.tight) .sep { margin: 0 2px; }
.tall { height: 54px; margin: 7px 4px 0; }
.combo { display: flex; position: relative; height: 23px; border: 1px solid #777; background: #fff; }
.combo::after { content: ""; position: absolute; right: 4px; top: 9px; border: 3px solid transparent; border-top: 3px solid #555; border-bottom: 0; }
.combo select, .combo input { appearance: none; width: 100%; padding: 0 2px; outline: 0; color: #222; }
.fontname { width: 172px; }
.fontsize { width: 40px; }
.wide { width: 140px; }
.bold { width: 22px; font-weight: 700; color: #555; }
.ital { font-style: italic; font-weight: 700; color: #555; font-family: "Liberation Serif", serif; font-size: 14px; }
.under { text-decoration: underline; color: #555; }
.pinyin { flex-direction: column; line-height: 9px; font-size: 10px; }
.pinyin b { color: #3f78b5; font-weight: 500; }
.pct { font-size: 14px; color: #444; }
.comma { width: 22px; font-size: 20px; font-weight: 700; color: #555; padding-bottom: 8px; }

.gallery { display: flex; border: 1px solid #cfcfcf; background: #fff; margin: 2px 0 0 3px; height: 62px; }
.swatches { display: grid; grid-template-columns: repeat(4, 100px); grid-template-rows: 22px 22px; gap: 6px; padding: 5px 4px; }
.sw { justify-content: flex-start; padding-left: 5px; font-size: 15px; line-height: 20px; }
.normal { outline: 2px solid #c9c9c3; box-shadow: 0 0 0 3px #8a8a8a; }
.bad { background: #ffc7ce; color: #9c0006; }
.good { background: #c6efce; color: #006100; }
.neutral { background: #ffeb9c; color: #9c5700; }
.link { color: #0563c1; text-decoration: underline; }
.calc { background: #f2f2f2; color: #fa7d00; border: 1px solid #7f7f7f; font-weight: 500; padding-left: 4px; }
.check { background: #a5a5a5; color: #fff; border: 3px double #3f3f3f; font-weight: 500; padding-left: 2px; }
.expl { color: #7f7f7f; font-style: italic; }
.gscroll { display: flex; flex-direction: column; width: 14px; border-left: 1px solid #cfcfcf; }
.gscroll button { flex: 1; border-bottom: 1px solid #cfcfcf; }
.gscroll button:last-child { border-bottom: 0; }
.gscroll .off { background: #e6e6e6; }
.collapse { margin: auto 9px 1px auto; }

/* formula bar */
.formula { display: flex; align-items: center; height: 48px; padding: 0 6px 0 5px; }
.namebox { width: 128px; height: 28px; border-color: #c6c6c6; }
.namebox::after { top: 11px; right: 6px; border-width: 4px 4px 0; }
.namebox input { padding-left: 7px; }
.formula .grip { margin: 0 13px 0 14px; }
.fxbox { display: flex; width: 110px; height: 28px; background: #fff; border: 1px solid #c6c6c6; margin-right: 3px; }
.fxbox button { flex: 1; }
.fxbox .fx { font: italic 700 16px/20px "Liberation Serif", serif; color: #666; }
.fx small { font-size: 12px; padding-top: 4px; }
.fxline { display: flex; align-items: center; flex: 1; height: 28px; background: #fff; border: 1px solid #c6c6c6; padding-right: 5px; }
.fxline input { flex: 1; outline: 0; }

/* grid */
.work { display: flex; flex: 1; }
.sheet { flex: 1; width: 0; table-layout: fixed; border-spacing: 0; font: 22px/24px "Noto Sans CJK SC", sans-serif; color: #000; }
.c-row { width: 43px; }
.c-a { width: 197px; }
.c-c { width: 195px; }
.c-e { width: 462px; }
.c-f { width: 299px; }
.sheet th { background: #e6e6e6; font-weight: 300; padding: 0; border-right: 1px solid #b5b5b5; border-bottom: 1px solid #999; }
.sheet thead th { height: 29px; }
.sheet thead th:last-child { border-right: 0; }
.sheet tbody th { vertical-align: bottom; border-right-color: #999; border-bottom-color: #b5b5b5; }
.sheet td { background: #fff; border-right: 1px solid #d4d4d4; border-bottom: 1px solid #d4d4d4; text-align: center; padding: 0; }
.sheet td:last-child { border-right-color: #999; }
.sheet .corner { background: linear-gradient(135deg, #e6e6e6 50%, #b2b2b2 50%) 18px 4px / 21px 21px no-repeat #e6e6e6; }
.sheet .sel { background: #d2d2d2; color: #217346; }
.sheet thead .sel { border-bottom: 2px solid #217346; }
.sheet tbody .sel { border-right: 2px solid #217346; }
.r1 { height: 90px; }
.r2 { height: 478px; }
.r3 { height: 90px; }
.r4 { height: 88px; }
.sheet tbody th { padding-bottom: 2px; }
.sheet .r1 td { background: #4472c4; border-color: #4472c4; color: #fff; font-size: 23px; font-weight: 500; }
.sheet .r1 .free { background: #fff; border-color: #d4d4d4; }
.sheet .r1 .free:last-child { border-right-color: #999; }
.sheet .r2 td { font-size: 36px; line-height: 48px; font-weight: 500; }
.sheet .r2 td:nth-child(-n+6) { border-bottom-color: #4472c4; }
.acct { display: flex; justify-content: space-between; padding: 0 14px 0 21px; }
.total { position: relative; }
.total::after { content: ""; position: absolute; right: 0; bottom: 0; border: 3px solid #2f5597; border-left-color: transparent; border-top-color: transparent; }
.current { position: relative; }
.current::before { content: ""; position: absolute; inset: -2px; border: 2px solid #217346; }
.current::after { content: ""; position: absolute; right: -4px; bottom: -4px; width: 7px; height: 7px; background: #217346; border: 1px solid #fff; border-width: 1px 0 0 1px; }
.sheet .r4 th, .sheet .r4 td { border-bottom: 0; }
.vscroll { display: flex; flex-direction: column; width: 21px; padding: 2px 3px 0; }
.vscroll button, .hscroll button { width: 15px; height: 15px; background: #fff; border: 1px solid #777; flex: none; }
.vtrack { flex: 1; background: #dadada; }
.vthumb { height: 40%; background: #fff; border: 1px solid #777; }

/* sheet tabs */
.sheetbar { display: flex; height: 28px; border-top: 1px solid #999; align-items: center; padding-right: 21px; }
.navs { display: flex; width: 100px; padding-left: 17px; gap: 5px; }
.navs button { width: 24px; height: 24px; }
.stab { width: 69px; height: 25px; align-self: flex-start; margin-top: -1px; background: #fff; border: solid #999; border-width: 0 1px; color: #217346; box-shadow: inset 0 -2px #217346; font-size: 13px; padding-bottom: 2px; }
.add { margin-left: 33px; }
.sheetbar .grip { margin: 0 15px 0 auto; }
.hscroll { display: flex; flex: 0 1 730px; height: 15px; }
.htrack { flex: 1; background: #dadada; }
.hthumb { width: 75%; height: 15px; background: #fff; border: 1px solid #777; }

/* status bar */
.status { display: flex; align-items: center; height: 23px; background: #f3f3f3; border-top: 1px solid #c6c6c6; border-bottom: 1px solid #cfdcec; padding: 0 9px 0 8px; }
.macro { margin: 0 17px 0 19px; }
.acc { margin-right: 2px; }
.views { display: flex; margin-left: auto; margin-right: 6px; }
.view { width: 40px; height: 21px; }
.current-view { background: #c6c6c6; }
.zb { width: 8px; height: 20px; }
.zoom { appearance: none; width: 100px; height: 20px; margin: 0 5px; background: linear-gradient(#444, #444) 0 10px / 100% 1px no-repeat, linear-gradient(#444, #444) 50px 8px / 1px 5px no-repeat; }
.zoom::-webkit-slider-thumb { appearance: none; width: 5px; height: 11px; background: #666; }
.pctval { margin-left: 14px; }

/* overlays */
.pointer { position: absolute; left: 105px; top: 25px; pointer-events: none; }
.floater { position: absolute; right: 0; top: 137px; }
.brand { position: absolute; right: 100px; bottom: 32px; pointer-events: none; fill: #fff; opacity: .9; }
.brand > * { filter: drop-shadow(0 0 1px #8c8c8c); }
.bai { font: 700 80px "Liberation Sans", sans-serif; stroke: #fff; stroke-width: 2; }
.du { font: 700 46px "Liberation Sans", sans-serif; }
.jy { font: 900 58px "Noto Sans CJK SC", sans-serif; }
.url { font: 400 41px "Open Sans", sans-serif; }
```
